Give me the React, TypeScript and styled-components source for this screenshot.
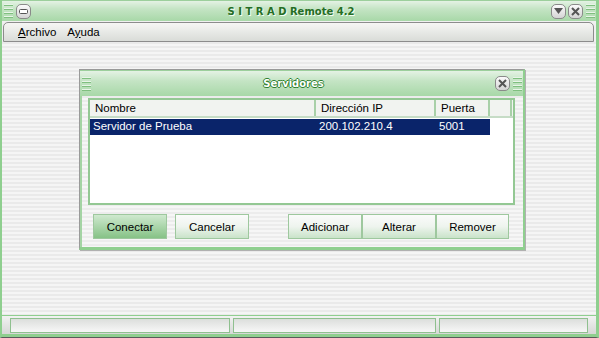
import React from "react";
import styled, { createGlobalStyle } from "styled-components";

const GlobalStyle = createGlobalStyle`
  html, body {
    margin: 0;
    padding: 0;
    background: #ececec;
  }
  * {
    box-sizing: border-box;
  }
`;

const Window = styled.div`
  width: 599px;
  height: 338px;
  display: flex;
  flex-direction: column;
  font-family: "Liberation Sans", Arial, sans-serif;
  font-size: 11.5px;
  color: #000;
  border-left: 2px solid #8fcf8f;
  border-right: 3px solid #8fcf8f;
  border-bottom: 1px solid #5a5a5a;
  background: #f0f0f0;
  overflow: hidden;
`;

const TitleBar = styled.div<{ small?: boolean }>`
  height: ${(p) => (p.small ? "26px" : "21px")};
  flex: none;
  display: flex;
  align-items: center;
  gap: 2px;
  padding: 0 0 0 1px;
  background: linear-gradient(#e4f2e4 0%, #c4e4c4 40%, #a8d8a8 100%);
  border-top: 1px solid #9ccf9c;
`;

const Grip = styled.div`
  width: 9px;
  height: 14px;
  flex: none;
  margin: 0 1px;
  background: repeating-linear-gradient(
    #e8f4e8 0px,
    #e8f4e8 1px,
    #7fbf7f 1px,
    #7fbf7f 2px,
    transparent 2px,
    transparent 4px
  );
`;

const Title = styled.div<{ light?: boolean }>`
  flex: 1;
  text-align: center;
  font-family: "DejaVu Sans", Verdana, sans-serif;
  font-weight: bold;
  font-size: 10px;
  color: ${(p) => (p.light ? "#ffffff" : "#256d25")};
  white-space: pre;
  text-shadow: ${(p) =>
    p.light
      ? "1px 0 #2f7f2f, -1px 0 #2f7f2f, 0 1px #2f7f2f, 0 -1px #2f7f2f"
      : "1px 1px #f4fff4"};
`;

const RoundButton = styled.div`
  width: 15px;
  height: 15px;
  flex: none;
  border: 1px solid #8a8a8a;
  border-radius: 5px;
  background: linear-gradient(#fbfbfb, #d4d4d4);
  display: flex;
  align-items: center;
  justify-content: center;
`;

const MenuBar = styled.div`
  height: 20px;
  margin: 1px 2px 0 1px;
  flex: none;
  display: flex;
  align-items: center;
  gap: 11px;
  padding-left: 14px;
  border: 1px solid #8c8c8c;
  border-radius: 5px 5px 0 0;
  background: linear-gradient(#f6f6f4, #d9dcd8);
`;

const MenuItem = styled.span`
  color: #000;
  u {
    text-decoration: underline;
  }
`;

const Desk = styled.div`
  flex: 1;
  padding: 27px 0 0 77px;
  background: repeating-linear-gradient(
    #eaeaea 0px,
    #eaeaea 2px,
    #f5f5f5 2px,
    #f5f5f5 4px
  );
`;

const Dialog = styled.div`
  width: 446px;
  height: 181px;
  display: flex;
  flex-direction: column;
  border: 1px solid #9a9a9a;
  border-right: 2px solid #8fcf8f;
  border-bottom: 3px solid #8fcf8f;
  box-shadow: 1px 1px 0 #b0b0b0;
  background: #efefef;
`;

const DialogBody = styled.div`
  flex: 1;
  display: flex;
  flex-direction: column;
  padding: 2px 8px 0 6px;
  border-left: 2px solid #a4d4a4;
  background: repeating-linear-gradient(
    #ececec 0px,
    #ececec 2px,
    #f6f6f6 2px,
    #f6f6f6 4px
  );
`;

const ListBox = styled.div`
  height: 107px;
  border: 2px solid #94c894;
  background: #fff;
  padding: 0;
`;

const HeaderRow = styled.div`
  display: flex;
  height: 18px;
  background: #f1f3f0;
  border-bottom: 2px solid #c6dcc6;
`;

const HeaderCell = styled.div<{ w: number }>`
  width: ${(p) => p.w}px;
  flex: none;
  padding-left: 5px;
  line-height: 17px;
  border-right: 2px solid #a8d0a8;
`;

const DataRow = styled.div`
  display: flex;
  height: 16px;
  width: 400px;
  margin-top: 1px;
  background: #0a246a;
  color: #fff;
`;

const DataCell = styled.div<{ w: number }>`
  width: ${(p) => p.w}px;
  flex: none;
  padding-left: 3px;
  line-height: 15px;
`;

const ButtonRow = styled.div`
  display: flex;
  align-items: center;
  padding: 9px 0 0 5px;
`;

const Button = styled.div<{ primary?: boolean; w: number }>`
  width: ${(p) => p.w}px;
  height: 25px;
  display: flex;
  align-items: center;
  justify-content: center;
  border: 1px solid #9ec89e;
  background: ${(p) =>
    p.primary
      ? "linear-gradient(#cfe9cf, #86c286)"
      : "linear-gradient(#fbfbfb 0%, #eef4ee 50%, #c9e3c9 100%)"};
`;

const Spacer = styled.div<{ w: number }>`
  width: ${(p) => p.w}px;
  flex: none;
`;

const StatusBar = styled.div`
  height: 22px;
  flex: none;
  display: flex;
  gap: 3px;
  padding: 2px 8px 1px 8px;
  border-top: 1px solid #8fcf8f;
  background: linear-gradient(#f2f2f2, #d6d8d6);
  border-bottom: 3px solid #8fcf8f;
`;

const StatusPanel = styled.div<{ w: number }>`
  width: ${(p) => p.w}px;
  border: 1px solid #8fc08f;
  background: linear-gradient(#dcdedc, #f7f7f7);
`;

const MinusIcon = () => (
  <svg width="9" height="5" viewBox="0 0 9 5">
    <rect x="0.5" y="0.5" width="8" height="4" rx="1" fill="#fff" stroke="#555" />
  </svg>
);

const DownIcon = () => (
  <svg width="9" height="7" viewBox="0 0 9 7">
    <path d="M0 0 H9 L4.5 6 Z" fill="#555" />
  </svg>
);

const CloseIcon = () => (
  <svg width="9" height="9" viewBox="0 0 9 9">
    <path d="M1 1 L8 8 M8 1 L1 8" stroke="#555" strokeWidth="2" />
  </svg>
);

const App = () => (
  <>
    <GlobalStyle />
    <Window>
      <TitleBar>
        <Grip />
        <RoundButton>
          <MinusIcon />
        </RoundButton>
        <Title>{"S I T R A D Remote 4.2"}</Title>
        <RoundButton>
          <DownIcon />
        </RoundButton>
        <RoundButton>
          <CloseIcon />
        </RoundButton>
        <Grip />
      </TitleBar>
      <MenuBar>
        <MenuItem>
          <u>A</u>rchivo
        </MenuItem>
        <MenuItem>
          A<u>y</u>uda
        </MenuItem>
      </MenuBar>
      <Desk>
        <Dialog>
          <TitleBar small>
            <Grip />
            <Title light>Servidores</Title>
            <RoundButton>
              <CloseIcon />
            </RoundButton>
            <Grip />
          </TitleBar>
          <DialogBody>
            <ListBox>
              <HeaderRow>
                <HeaderCell w={226}>Nombre</HeaderCell>
                <HeaderCell w={120}>Dirección IP</HeaderCell>
                <HeaderCell w={54}>Puerta</HeaderCell>
                <HeaderCell w={22} />
              </HeaderRow>
              <DataRow>
                <DataCell w={226}>Servidor de Prueba</DataCell>
                <DataCell w={120}>200.102.210.4</DataCell>
                <DataCell w={54}>5001</DataCell>
              </DataRow>
            </ListBox>
            <ButtonRow>
              <Button primary w={74}>
                Conectar
              </Button>
              <Spacer w={8} />
              <Button w={74}>Cancelar</Button>
              <Spacer w={39} />
              <Button w={74}>Adicionar</Button>
              <Button w={74}>Alterar</Button>
              <Button w={73}>Remover</Button>
            </ButtonRow>
          </DialogBody>
        </Dialog>
      </Desk>
      <StatusBar>
        <StatusPanel w={220} />
        <StatusPanel w={203} />
        <StatusPanel w={149} />
      </StatusBar>
    </Window>
  </>
);

export default App;
